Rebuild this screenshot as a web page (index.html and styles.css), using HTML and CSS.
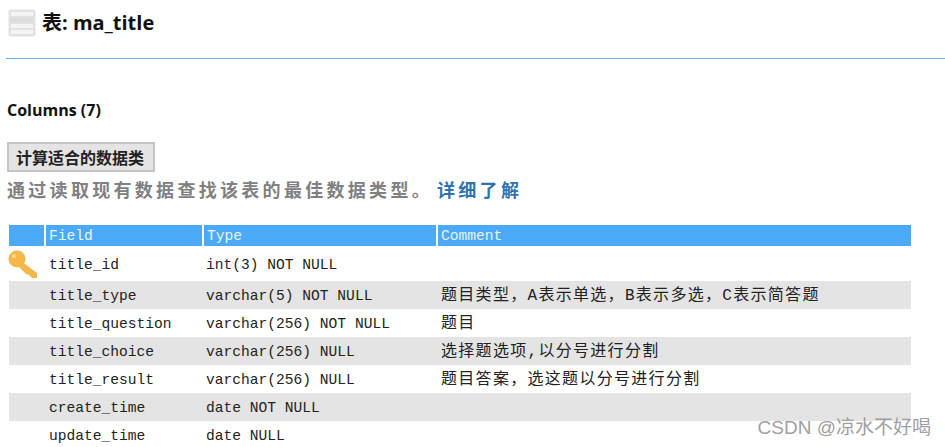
FILE: index.html
```html
<!DOCTYPE html>
<html lang="zh">
<head>
<meta charset="utf-8">
<title>ma_title</title>
<link rel="stylesheet" href="styles.css">
</head>
<body>
<header class="head">
  <svg class="tbl-icon" width="28" height="28" viewBox="0 0 28 28">
    <rect x="0.5" y="0.5" width="27" height="27" rx="2" fill="#e2e2e2"/>
    <rect x="3" y="3" width="22" height="4" fill="#f4f4f4"/>
    <rect x="3" y="9" width="22" height="4" fill="#dcdcdc"/>
    <rect x="3" y="15" width="22" height="4" fill="#f4f4f4"/>
    <rect x="3" y="21" width="22" height="4" fill="#f4f4f4"/>
  </svg>
  <h1 class="title">表: ma_title</h1>
</header>
<hr class="rule">
<h2 class="cols">Columns (7)</h2>
<button class="calc">计算适合的数据类</button>
<p class="hint">通过读取现有数据查找该表的最佳数据类型。<a class="more" href="#">详细了解</a></p>
<table class="grid">
  <thead>
    <tr><th class="c-key"></th><th class="c-field">Field</th><th class="c-type">Type</th><th>Comment</th></tr>
  </thead>
  <tbody>
    <tr class="r-first">
      <td class="key-cell"><svg class="key" width="32" height="30" viewBox="0 0 32 30"><circle cx="9" cy="9" r="8.500" fill="#f5b74a"/><circle cx="6" cy="6" r="2" fill="#fbdc9c"/><path d="M13 11 L29 23 L29 28 L24 28 L21 25 L18 24 L9 15 Z" fill="#f5b74a"/></svg></td>
      <td class="name">title_id</td><td>int(3) NOT NULL</td><td></td>
    </tr>
    <tr class="alt"><td></td><td class="name">title_type</td><td>varchar(5) NOT NULL</td><td class="cn">题目类型，A表示单选，B表示多选，C表示简答题</td></tr>
    <tr><td></td><td class="name">title_question</td><td>varchar(256) NOT NULL</td><td class="cn">题目</td></tr>
    <tr class="alt"><td></td><td class="name">title_choice</td><td>varchar(256) NULL</td><td class="cn">选择题选项,以分号进行分割</td></tr>
    <tr><td></td><td class="name">title_result</td><td>varchar(256) NULL</td><td class="cn">题目答案，选这题以分号进行分割</td></tr>
    <tr class="alt"><td></td><td class="name">create_time</td><td>date NOT NULL</td><td></td></tr>
    <tr><td></td><td class="name">update_time</td><td>date NULL</td><td></td></tr>
  </tbody>
</table>
<div class="mark">CSDN @凉水不好喝</div>
</body>
</html>
```
FILE: styles.css
```css
html, body { margin: 0; padding: 0; height: 447px; overflow: hidden; background: #fff; }
body { position: relative; font-family: "Open Sans", "Noto Sans CJK SC", sans-serif; color: #111; }
.head { display: flex; align-items: center; gap: 6px; padding: 9px 0 0 8px; height: 28px; }
.tbl-icon { flex: none; }
.title { margin: 0; font-size: 20px; font-weight: 700; line-height: 28px; font-family: "Open Sans", "Noto Sans CJK SC", sans-serif; }
.rule { margin: 21px 0 0 6px; border: 0; height: 1px; background: #5cb8fb; }
.cols { margin: 41px 0 0 7px; font-size: 16px; line-height: 20px; font-weight: 700; }
.calc { display: block; margin: 22px 0 0 7px; width: 148px; height: 30px; padding: 0 0 0 7px; text-align: left; background: #e4e4e4; border: 2px solid #c4c4c4; font: 700 16px/26px "Noto Sans CJK SC", sans-serif; color: #222; }
.hint { margin: 3px 0 0 7px; font: 700 18px/29px "Noto Sans CJK SC", sans-serif; letter-spacing: 3.3px; color: #808080; white-space: nowrap; }
.more { color: #2f72ae; text-decoration: none; margin-left: 4px; }
.grid { margin: 21px 0 0 9px; width: 902px; border-collapse: collapse; table-layout: fixed; font: 14.6px/20px "Liberation Mono", "Noto Sans CJK SC", monospace; color: #222; }
.grid th { height: 20px; padding: 1px 0 0 3px; background: #4ba9f8; color: #e8f4ff; text-align: left; font-weight: 400; border-right: 2px solid #fff; box-sizing: border-box; }
.grid th:last-child { border-right: 0; }
.c-key { width: 36px; }
.c-field { width: 158px; }
.c-type { width: 234px; }
.grid td { height: 28px; padding: 2px 0 0 3px; white-space: nowrap; box-sizing: border-box; }
.grid td.name { padding-left: 4px; }
.grid .r-first td { height: 35px; }
.grid .alt td { background: #e4e4e4; }
.grid td.cn { font-size: 16px; letter-spacing: 1.3px; padding-left: 4px; }
.grid td.key-cell { padding: 0; position: relative; }
.key { position: absolute; left: -1px; top: 4px; }
.mark { position: absolute; right: 14px; top: 416px; font: 19px/24px "Liberation Sans", "Noto Sans CJK SC", sans-serif; color: #a0a0a0; }
```
